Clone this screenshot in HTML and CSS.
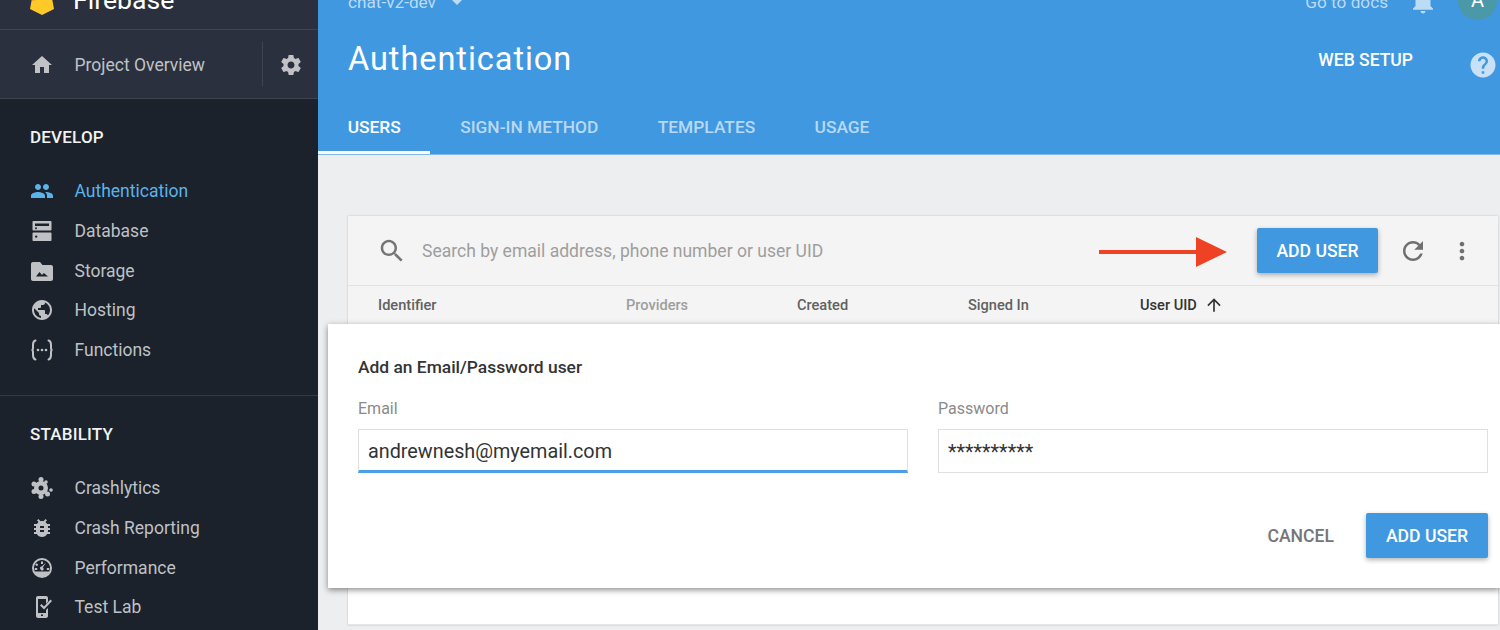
FILE: index.html
```html
<!DOCTYPE html>
<html lang="en">
<head>
    <meta charset="UTF-8">
    <title>Firebase - Authentication</title>
    <link rel="stylesheet" href="styles.css">
</head>
<body>
<div class="app">
    <!-- sidebar -->
    <aside class="sidebar">
        <div class="brand">
            <svg class="brand-logo" width="24" height="30" viewBox="0 0 24 30">
                <path d="M0 23 4 2h16l4 21-12 6z" fill="#ffca28"/>
                <path d="M4 2h5l-2 12-5 1z" fill="#f59a23"/>
            </svg>
            <span class="brand-name">Firebase</span>
        </div>
        <div class="overview">
            <svg class="icon" viewBox="0 0 24 24"><path d="M10 20v-6h4v6h5v-8h3L12 3 2 12h3v8z"/></svg>
            <span class="overview-name">Project Overview</span>
            <span class="overview-sep"></span>
            <svg class="icon gear" viewBox="0 0 24 24"><path d="M19.43 12.98c.04-.32.07-.64.07-.98s-.03-.66-.07-.98l2.11-1.65c.19-.15.24-.42.12-.64l-2-3.46c-.12-.22-.39-.3-.61-.22l-2.49 1c-.52-.4-1.08-.73-1.69-.98l-.38-2.65C14.46 2.18 14.25 2 14 2h-4c-.25 0-.46.18-.49.42l-.38 2.65c-.61.25-1.17.59-1.69.98l-2.49-1c-.23-.09-.49 0-.61.22l-2 3.46c-.13.22-.07.49.12.64l2.11 1.65c-.04.32-.07.65-.07.98s.03.66.07.98l-2.11 1.65c-.19.15-.24.42-.12.64l2 3.46c.12.22.39.3.61.22l2.49-1c.52.4 1.08.73 1.69.98l.38 2.65c.03.24.24.42.49.42h4c.25 0 .46-.18.49-.42l.38-2.65c.61-.25 1.17-.59 1.69-.98l2.49 1c.23.09.49 0 .61-.22l2-3.46c.12-.22.07-.49-.12-.64l-2.11-1.65zM12 15.5c-1.93 0-3.5-1.57-3.5-3.5s1.57-3.5 3.5-3.5 3.5 1.57 3.5 3.5-1.57 3.5-3.5 3.5z"/></svg>
        </div>
        <nav class="nav">
            <section class="nav-group">
                <h3 class="nav-title">DEVELOP</h3>
                <a class="nav-item active">
                    <svg class="icon" viewBox="0 0 24 24"><path d="M16 11c1.66 0 2.99-1.34 2.99-3S17.66 5 16 5c-1.66 0-3 1.34-3 3s1.34 3 3 3zm-8 0c1.66 0 2.99-1.34 2.99-3S9.66 5 8 5C6.34 5 5 6.34 5 8s1.34 3 3 3zm0 2c-2.33 0-7 1.17-7 3.5V19h14v-2.5c0-2.33-4.67-3.5-7-3.5zm8 0c-.29 0-.62.02-.97.05 1.16.84 1.97 1.97 1.97 3.45V19h6v-2.5c0-2.33-4.67-3.5-7-3.5z"/></svg>
                    Authentication
                </a>
                <a class="nav-item">
                    <svg class="icon" viewBox="0 0 24 24"><path fill-rule="evenodd" d="M3.500 2h17c.6 0 1 .4 1 1v7.500c0 .6-.4 1-1 1h-17c-.6 0-1-.4-1-1V3c0-.6.4-1 1-1zM5 4.500v2.400h14V4.500zM3.500 13.500h17c.6 0 1 .4 1 1V21c0 .6-.4 1-1 1h-17c-.6 0-1-.4-1-1v-6.500c0-.6.4-1 1-1zM5 17.600a1.200 1.200 0 1 0 2.400 0 1.200 1.200 0 0 0-2.400 0zM5 9.200a1 1 0 1 0 2 0 1 1 0 0 0-2 0z"/></svg>
                    Database
                </a>
                <a class="nav-item">
                    <svg class="icon" viewBox="0 0 24 24"><path fill-rule="evenodd" d="M10 3H3c-1.100 0-2 .9-2 2v15c0 1.100.9 2 2 2h18c1.100 0 2-.9 2-2V8c0-1.100-.9-2-2-2h-8.500zM6 17.500l3.500-4.500 2.500 3 1.800-2 4.200 3.500z"/></svg>
                    Storage
                </a>
                <a class="nav-item">
                    <svg class="icon" viewBox="0 0 24 24"><path d="M12 2C6.480 2 2 6.480 2 12s4.480 10 10 10 10-4.480 10-10S17.520 2 12 2zm-1 17.930c-3.950-.490-7-3.850-7-7.930 0-.620.080-1.210.210-1.790L9 15v1c0 1.100.900 2 2 2v1.930zm6.900-2.540c-.260-.810-1-1.390-1.900-1.390h-1v-3c0-.550-.450-1-1-1H8v-2h2c.550 0 1-.450 1-1V7h2c1.100 0 2-.900 2-2v-.410c2.930 1.190 5 4.060 5 7.410 0 2.080-.800 3.970-2.100 5.390z"/></svg>
                    Hosting
                </a>
                <a class="nav-item">
                    <svg class="icon" viewBox="0 0 24 24">
                        <path d="M5.500 2.500C3 3 3 5 3 7v3c0 1-.5 2-1.500 2 1 0 1.500 1 1.500 2v3c0 2 0 4 2.500 4.500M18.500 2.500C21 3 21 5 21 7v3c0 1 .5 2 1.500 2-1 0-1.500 1-1.500 2v3c0 2 0 4-2.500 4.500" fill="none" stroke="currentColor" stroke-width="2" stroke-linecap="round"/>
                        <circle cx="8" cy="12" r="1.300"/><circle cx="12" cy="12" r="1.300"/><circle cx="16" cy="12" r="1.300"/>
                    </svg>
                    Functions
                </a>
            </section>
            <section class="nav-group">
                <h3 class="nav-title">STABILITY</h3>
                <a class="nav-item">
                    <svg class="icon" viewBox="0 0 24 24">
                        <path fill-rule="evenodd" d="M11 5a7 7 0 1 0 0 14 7 7 0 0 0 0-14zm0 4.500a2.500 2.500 0 1 1 0 5 2.500 2.500 0 0 1 0-5z"/>
                        <circle cx="11" cy="3.500" r="2.500"/><circle cx="4" cy="8" r="2.500"/><circle cx="4" cy="15.500" r="2.500"/>
                        <circle cx="11" cy="20.500" r="2.500"/><circle cx="17.500" cy="18" r="2.500"/><circle cx="21" cy="14" r="1.800"/><circle cx="16" cy="6" r="1.800"/>
                    </svg>
                    Crashlytics
                </a>
                <a class="nav-item">
                    <svg class="icon" viewBox="0 0 24 24"><path d="M20 8h-2.810c-.450-.780-1.070-1.450-1.820-1.960L17 4.410 15.590 3l-2.170 2.170C12.960 5.060 12.490 5 12 5c-.490 0-.960.060-1.410.170L8.410 3 7 4.410l1.620 1.630C7.880 6.550 7.260 7.220 6.810 8H4v2h2.090c-.050.330-.090.660-.090 1v1H4v2h2v1c0 .340.040.670.090 1H4v2h2.810c1.040 1.790 2.970 3 5.190 3s4.150-1.210 5.190-3H20v-2h-2.090c.050-.330.090-.660.090-1v-1h2v-2h-2v-1c0-.340-.040-.670-.090-1H20V8zm-6 8h-4v-2h4v2zm0-4h-4v-2h4v2z"/></svg>
                    Crash Reporting
                </a>
                <a class="nav-item">
                    <svg class="icon" viewBox="0 0 24 24"><path fill-rule="evenodd" d="M12 2a10 10 0 1 0 0 20 10 10 0 0 0 0-20zm0 2a8 8 0 0 1 7.200 11.500H4.800A8 8 0 0 1 12 4zM11 5.500v2.500h2V5.500zM6.500 7.300 5.200 8.800l1.700 1.500L8.300 8.800zM16 6.800l-3.200 4.700a1.600 1.600 0 1 1-2.300 1.800 1.600 1.600 0 0 1 1.200-2.800zM4.800 12v2h2.400v-2zM16.800 12v2h2.400v-2z"/></svg>
                    Performance
                </a>
                <a class="nav-item">
                    <svg class="icon" viewBox="0 0 24 24"><path fill-rule="evenodd" d="M8 1h8c1.100 0 2 .9 2 2v3.500l-2 2.200V4H8v14h8v-3l2-2v8c0 1.100-.9 2-2 2H8c-1.100 0-2-.9-2-2V3c0-1.100.9-2 2-2zM11 19.500v1.500h2v-1.500zM20.500 4.500 22 6l-8 8.500-4-4 1.500-1.500 2.500 2.500z"/></svg>
                    Test Lab
                </a>
            </section>
        </nav>
    </aside>

    <!-- main column -->
    <main class="main">
        <header class="top">
            <div class="topbar">
                <span class="project">chat-v2-dev</span>
                <svg class="caret" width="10" height="6" viewBox="0 0 10 6"><path d="M0 0h10L5 5z"/></svg>
                <span class="docs">Go to docs</span>
                <svg class="bell" viewBox="0 0 24 24"><path d="M12 22c1.100 0 2-.900 2-2h-4c0 1.100.890 2 2 2zm6-6v-5c0-3.070-1.640-5.640-4.500-6.320V4c0-.830-.670-1.500-1.500-1.500s-1.500.670-1.500 1.500v.680C7.630 5.360 6 7.920 6 11v5l-2 2v1h16v-1l-2-2z"/></svg>
                <span class="avatar">A</span>
            </div>
            <div class="title-row">
                <h1 class="page-title">Authentication</h1>
                <a class="web-setup">WEB SETUP</a>
                <svg class="help" viewBox="0 0 24 24"><path d="M12 2C6.480 2 2 6.480 2 12s4.480 10 10 10 10-4.480 10-10S17.520 2 12 2zm1 17h-2v-2h2v2zm2.070-7.750l-.900.920C13.450 12.900 13 13.500 13 15h-2v-.500c0-1.100.450-2.100 1.170-2.830l1.240-1.260c.370-.360.590-.860.590-1.410 0-1.100-.900-2-2-2s-2 .900-2 2H8c0-2.210 1.790-4 4-4s4 1.790 4 4c0 .880-.360 1.680-.930 2.250z"/></svg>
            </div>
            <div class="tabs">
                <a class="tab active">USERS</a>
                <a class="tab">SIGN-IN METHOD</a>
                <a class="tab">TEMPLATES</a>
                <a class="tab">USAGE</a>
            </div>
        </header>

        <div class="content">
            <div class="card">
                <div class="toolbar">
                    <svg class="search-icon" viewBox="0 0 24 24"><path d="M15.500 14h-.790l-.280-.270C15.410 12.590 16 11.110 16 9.500 16 5.910 13.090 3 9.500 3S3 5.910 3 9.500 5.910 16 9.500 16c1.610 0 3.090-.590 4.230-1.570l.270.280v.790l5 4.990L20.490 19l-4.990-5zm-6 0C7.010 14 5 11.990 5 9.500S7.010 5 9.500 5 14 7.010 14 9.500 11.990 14 9.500 14z"/></svg>
                    <span class="search-text">Search by email address, phone number or user UID</span>
                    <button class="btn-primary">ADD USER</button>
                    <svg class="tool-icon refresh" viewBox="0 0 24 24"><path d="M17.650 6.350C16.200 4.900 14.210 4 12 4c-4.420 0-7.990 3.580-7.990 8s3.570 8 7.990 8c3.730 0 6.840-2.550 7.730-6h-2.080c-.820 2.330-3.040 4-5.650 4-3.310 0-6-2.690-6-6s2.690-6 6-6c1.660 0 3.140.690 4.220 1.780L13 11h7V4l-2.350 2.350z"/></svg>
                    <svg class="tool-icon more" viewBox="0 0 24 24"><path d="M12 8c1.100 0 2-.900 2-2s-.900-2-2-2-2 .900-2 2 .900 2 2 2zm0 2c-1.100 0-2 .900-2 2s.900 2 2 2 2-.900 2-2-.900-2-2-2zm0 6c-1.100 0-2 .900-2 2s.900 2 2 2 2-.900 2-2-.900-2-2-2z"/></svg>
                </div>
                <div class="table-head">
                    <span>Identifier</span>
                    <span class="muted">Providers</span>
                    <span>Created</span>
                    <span>Signed In</span>
                    <span class="sorted">User UID
                        <svg class="sort-icon" viewBox="0 0 24 24"><path d="M4 12l1.410 1.410L11 7.830V20h2V7.830l5.580 5.590L20 12l-8-8-8 8z"/></svg>
                    </span>
                </div>
                <div class="table-body"></div>
            </div>
        </div>

        <!-- annotation arrow -->
        <svg class="arrow" width="128" height="32" viewBox="0 0 128 32">
            <path d="M0 14h97V1l31 15-31 15V18H0z" fill="#ef4123"/>
        </svg>

        <!-- add user panel -->
        <div class="panel">
            <h2 class="panel-title">Add an Email/Password user</h2>
            <div class="fields">
                <label class="field">
                    <span class="field-label">Email</span>
                    <input class="field-input focused" type="text" value="andrewnesh@myemail.com">
                </label>
                <label class="field">
                    <span class="field-label">Password</span>
                    <input class="field-input" type="text" value="**********">
                </label>
            </div>
            <div class="panel-actions">
                <button class="btn-flat">CANCEL</button>
                <button class="btn-primary">ADD USER</button>
            </div>
        </div>
    </main>
</div>
</body>
</html>
```

FILE: styles.css
```css
* {
    box-sizing: border-box;
}

html, body {
    margin: 0;
    height: 630px;
    overflow: hidden;
}

body {
    font-family: Roboto, "Liberation Sans", sans-serif;
    background: #eceef0;
    color: #333;
}

.app {
    display: flex;
    height: 630px;
}

/* sidebar */
.sidebar {
    width: 318px;
    flex: none;
    background: #1b222c;
    overflow: hidden;
}

.brand {
    height: 30px;
    background: #2a303d;
    border-bottom: 1px solid #3d4350;
    display: flex;
    align-items: flex-start;
    padding-left: 30px;
    overflow: hidden;
}

.brand-logo {
    flex: none;
    margin-top: -14px;
}

.brand-name {
    color: #fff;
    font-size: 26.600px;
    line-height: 28px;
    margin-left: 19px;
    margin-top: -14px;
}

.overview {
    height: 69px;
    background: #2a303d;
    border-bottom: 1px solid #3d4350;
    display: flex;
    align-items: center;
    padding: 2px 0 0 30px;
    color: #c0c2c6;
}

.icon {
    width: 24px;
    height: 24px;
    flex: none;
    fill: currentColor;
}

.overview-name {
    font-size: 17.500px;
    margin-left: 20.500px;
    width: 187.500px;
}

.overview-sep {
    width: 1px;
    height: 44px;
    background: #3d4350;
    margin-top: -2px;
}

.gear {
    margin-left: 16px;
}

.nav-group {
    height: 297px;
    padding-top: 26px;
    border-bottom: 1px solid #343b47;
}

.nav-group:last-child {
    border-bottom: none;
}

.nav-title {
    margin: 0 0 22.500px 30px;
    color: #f2f2f2;
    font-size: 17px;
    line-height: 24px;
    font-weight: 500;
    letter-spacing: 0.2px;
}

.nav-item {
    display: flex;
    align-items: center;
    gap: 20.500px;
    height: 39.700px;
    padding-left: 30px;
    color: #bfc1c5;
    font-size: 17.500px;
}

.nav-item.active {
    color: #5cb3ea;
}

/* main column */
.main {
    flex: 1;
    position: relative;
    min-width: 0;
}

.top {
    height: 155px;
    background: #4098e0;
    border-bottom: 1px solid #7fb9e9;
    color: #fff;
}

.topbar {
    height: 20px;
    display: flex;
    align-items: flex-end;
    padding-left: 30px;
    color: #bcdbf5;
    font-size: 17.200px;
    overflow: hidden;
}

.project {
    line-height: 20px;
    margin-bottom: 8px;
}

.caret {
    fill: #bcdbf5;
    margin: 0 0 14px 16px;
}

.docs {
    margin-left: auto;
    line-height: 20px;
    margin-bottom: 8px;
}

.bell {
    width: 30px;
    height: 30px;
    flex: none;
    fill: #bcdbf5;
    margin-left: 20px;
    margin-bottom: 4px;
}

.avatar {
    width: 39px;
    height: 39px;
    border-radius: 50%;
    background: #4a98a8;
    color: #fff;
    font-size: 20px;
    line-height: 39px;
    text-align: center;
    margin-left: 20px;
    margin-right: 3px;
    flex: none;
}

.title-row {
    height: 84px;
    display: flex;
    align-items: center;
    padding: 0 0 6px 30px;
}

.page-title {
    margin: 0;
    font-size: 32.500px;
    font-weight: 400;
    line-height: 40px;
    letter-spacing: 0.95px;
}

.web-setup {
    margin-left: auto;
    margin-top: 2px;
    font-size: 17.500px;
    font-weight: 500;
}

.help {
    width: 30px;
    height: 30px;
    flex: none;
    fill: #c9e1f6;
    margin: 11px 2px 0 55px;
}

.tabs {
    height: 50px;
    display: flex;
}

.tab {
    height: 50px;
    padding: 12px 29.700px 0;
    line-height: 22px;
    color: #b8d8f4;
    font-size: 17.350px;
    font-weight: 500;
}

.tab.active {
    color: #fff;
    border-bottom: 3px solid #fff;
}

/* users card */
.content {
    padding: 61px 2px 0 30px;
}

.card {
    background: #f4f4f4;
    box-shadow: 0 0 2px rgba(0, 0, 0, 0.2);
}

.toolbar {
    height: 70px;
    display: flex;
    align-items: center;
    padding: 0 22px 0 29px;
    border-bottom: 1px solid #e2e2e2;
}

.toolbar .btn-primary {
    width: 121px;
}

.search-icon {
    width: 30px;
    height: 30px;
    fill: #757575;
    flex: none;
}

.search-text {
    margin-left: 15px;
    color: #9e9e9e;
    font-size: 17.550px;
    flex: 1;
}

.btn-primary {
    width: 122px;
    height: 45px;
    border: none;
    border-radius: 2px;
    background: #4098e0;
    color: #fff;
    font-family: inherit;
    font-size: 17.600px;
    font-weight: 500;
    box-shadow: 0 2px 5px rgba(0, 0, 0, 0.3);
    flex: none;
}

.tool-icon {
    fill: #6f6f6f;
    flex: none;
}

.refresh {
    width: 30px;
    height: 30px;
    margin-left: 20px;
}

.more {
    width: 28px;
    height: 28px;
    margin-left: 20px;
}

.table-head {
    height: 38px;
    display: grid;
    grid-template-columns: 248px 171px 171px 172px 1fr;
    align-items: center;
    padding-left: 30px;
    font-size: 14.600px;
    font-weight: 500;
    color: #616161;
}

.table-head .muted {
    color: #9e9e9e;
}

.sorted {
    color: #333;
    display: flex;
    align-items: center;
    gap: 7px;
}

.sort-icon {
    width: 20px;
    height: 20px;
    fill: #333;
}

.table-body {
    height: 301px;
    background: #fff;
    border-bottom: 1px solid #e6e6e6;
}

/* arrow on top of the toolbar */
.arrow {
    position: absolute;
    left: 781px;
    top: 236px;
}

/* add user panel, lies over the table */
.panel {
    position: absolute;
    left: 10px;
    right: 0;
    top: 324px;
    height: 264px;
    background: #fff;
    padding: 30px 12px 0 30px;
    box-shadow: 0 2px 6px rgba(0, 0, 0, 0.45);
}

.panel-title {
    margin: 0;
    font-size: 17.400px;
    line-height: 26px;
    font-weight: 500;
    color: #333;
}

.fields {
    display: grid;
    grid-template-columns: 550px 550px;
    gap: 30px;
    margin-top: 19px;
}

.field {
    display: block;
}

.field-label {
    display: block;
    color: #8a8a8a;
    font-size: 16px;
    line-height: 20px;
    margin-bottom: 10px;
}

.field-input {
    display: block;
    width: 100%;
    height: 44px;
    border: 1px solid #e0e0e0;
    padding: 2px 9px 0;
    font-family: inherit;
    font-size: 19.800px;
    color: #333;
    outline: none;
    background: #fff;
}

.field-input.focused {
    border-bottom: 3px solid #4c9fe6;
}

.panel-actions {
    display: flex;
    justify-content: flex-end;
    align-items: center;
    gap: 32px;
    margin-top: 40px;
}

.btn-flat {
    border: none;
    background: none;
    padding: 0;
    color: #757575;
    font-family: inherit;
    font-size: 17.600px;
    font-weight: 500;
}
```
